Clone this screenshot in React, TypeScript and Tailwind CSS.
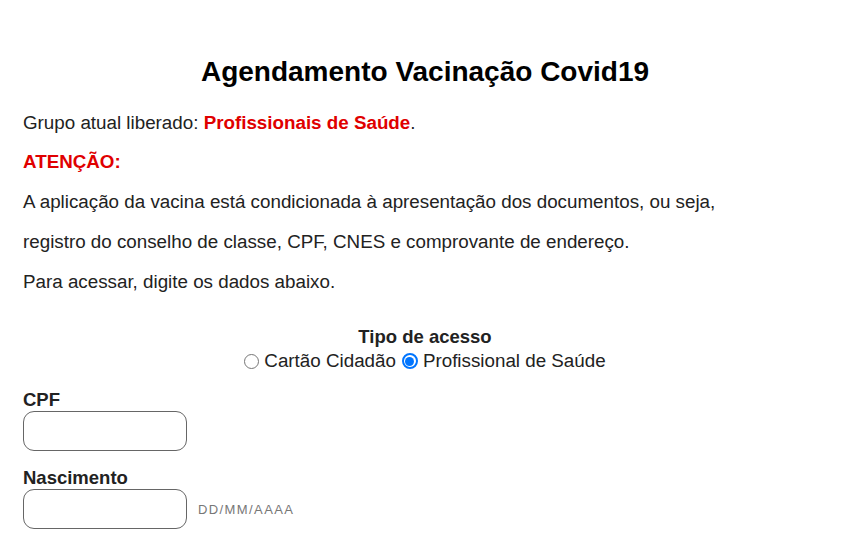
import React from "react";

export default function App() {
  return (
    <div className="w-[850px] h-[560px] overflow-hidden bg-white text-[#222] relative" style={{ fontFamily: '"Liberation Sans", Arial, sans-serif' }}>
      <div className="px-[23px]">
        <h1 className="text-[28px] font-bold text-black text-center leading-[30px] pt-[57px]">Agendamento Vacinação Covid19</h1>
        <p className="text-[18.8px] leading-[20px] mt-[26px]">
          Grupo atual liberado: <span className="font-bold text-[#e00000]">Profissionais de Saúde</span>.
        </p>
        <p className="text-[18.8px] leading-[20px] mt-[19px] font-bold text-[#e00000]">ATENÇÃO:</p>
        <p className="text-[18.8px] leading-[20px] mt-[20px]">A aplicação da vacina está condicionada à apresentação dos documentos, ou seja,</p>
        <p className="text-[18.8px] leading-[20px] mt-[20px]">registro do conselho de classe, CPF, CNES e comprovante de endereço.</p>
        <p className="text-[18.8px] leading-[20px] mt-[20px]">Para acessar, digite os dados abaixo.</p>
        <div className="text-center mt-[35px]">
          <div className="text-[18.5px] leading-[20px] font-bold">Tipo de acesso</div>
          <div className="text-[18.8px] leading-[20px] flex items-center justify-center gap-[4px] mt-[4px]">
            <span className="inline-flex items-center gap-[5px]">
              <span className="w-[15px] h-[15px] rounded-full border border-[#767676] bg-white inline-block"></span>
              Cartão Cidadão
            </span>
            <span className="inline-flex items-center gap-[5px] ml-[2px]">
              <span className="w-[16px] h-[16px] rounded-full border-2 border-[#0075ff] bg-white inline-flex items-center justify-center">
                <span className="w-[9px] h-[9px] rounded-full bg-[#0075ff]"></span>
              </span>
              Profissional de Saúde
            </span>
          </div>
        </div>
        <div className="mt-[19px] text-[18.5px] font-bold leading-[20px]">CPF</div>
        <div className="mt-[1px] w-[164px] h-[40px] rounded-[11px] border border-[#666]"></div>
        <div className="mt-[17px] text-[18.5px] font-bold leading-[20px]">Nascimento</div>
        <div className="mt-[1px] flex items-center gap-[11px]">
          <div className="w-[164px] h-[40px] rounded-[11px] border border-[#666]"></div>
          <span className="text-[13px] text-[#777] tracking-[1.4px] mt-[2px]">DD/MM/AAAA</span>
        </div>
      </div>
    </div>
  );
}
